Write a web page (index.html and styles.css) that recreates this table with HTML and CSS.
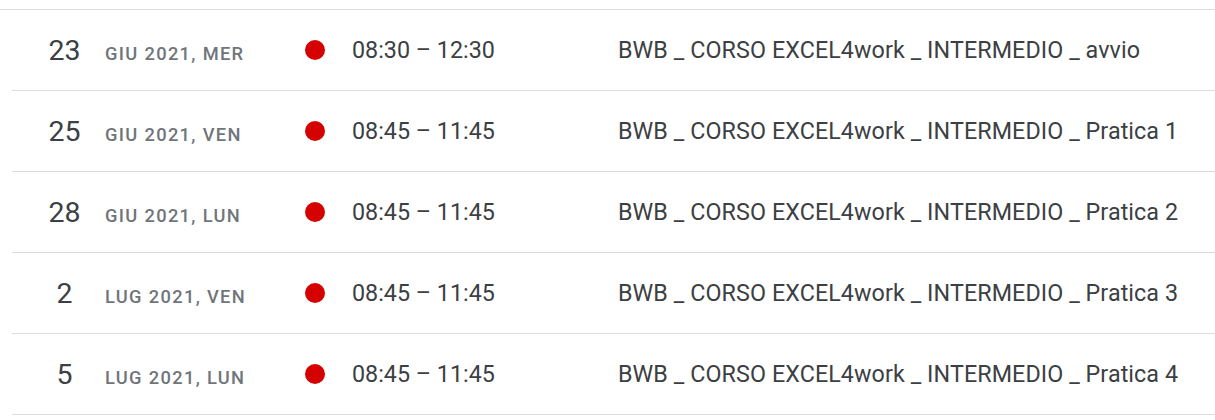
FILE: index.html
```html
<!DOCTYPE html>
<html lang="it">
<head>
<meta charset="utf-8">
<title>Agenda</title>
<link rel="stylesheet" href="styles.css">
</head>
<body>
<div class="page">
  <div class="topline"></div>
  <ul class="agenda">
    <li class="row">
      <div class="date"><span class="day">23</span><span class="label">GIU 2021, MER</span></div>
      <span class="dot"></span>
      <span class="time">08:30 – 12:30</span>
      <span class="title">BWB _ CORSO EXCEL4work _ INTERMEDIO _ avvio</span>
    </li>
    <li class="row">
      <div class="date"><span class="day">25</span><span class="label">GIU 2021, VEN</span></div>
      <span class="dot"></span>
      <span class="time">08:45 – 11:45</span>
      <span class="title">BWB _ CORSO EXCEL4work _ INTERMEDIO _ Pratica 1</span>
    </li>
    <li class="row">
      <div class="date"><span class="day">28</span><span class="label">GIU 2021, LUN</span></div>
      <span class="dot"></span>
      <span class="time">08:45 – 11:45</span>
      <span class="title">BWB _ CORSO EXCEL4work _ INTERMEDIO _ Pratica 2</span>
    </li>
    <li class="row">
      <div class="date"><span class="day">2</span><span class="label">LUG 2021, VEN</span></div>
      <span class="dot"></span>
      <span class="time">08:45 – 11:45</span>
      <span class="title">BWB _ CORSO EXCEL4work _ INTERMEDIO _ Pratica 3</span>
    </li>
    <li class="row">
      <div class="date"><span class="day">5</span><span class="label">LUG 2021, LUN</span></div>
      <span class="dot"></span>
      <span class="time">08:45 – 11:45</span>
      <span class="title">BWB _ CORSO EXCEL4work _ INTERMEDIO _ Pratica 4</span>
    </li>
  </ul>
</div>
</body>
</html>
```

FILE: styles.css
```css
html, body {
  margin: 0;
  padding: 0;
  background: #ffffff;
}

.page {
  padding-top: 9px;
  font-family: Roboto, "Liberation Sans", Arial, sans-serif;
  color: #3c4043;
}

.topline {
  border-top: 1px solid #dadce0;
}

.agenda {
  list-style: none;
  margin: 0 0 0 12px;
  padding: 0;
}

.row {
  display: flex;
  align-items: center;
  height: 80px;
  border-bottom: 1px solid #dadce0;
}

.date {
  display: flex;
  align-items: baseline;
  width: 293px;
  padding-top: 2px;
}

.day {
  margin-left: 18px;
  width: 69px;
  text-align: center;
  font-size: 28.5px;
  line-height: 32px;
  font-weight: 400;
  color: #3c4043;
}

.label {
  margin-left: 6px;
  font-size: 18.3px;
  font-weight: 500;
  letter-spacing: 1.33px;
  color: #70757a;
  text-transform: uppercase;
}

.dot {
  width: 20px;
  height: 20px;
  border-radius: 50%;
  background: #d50000;
  flex: none;
}

.time {
  margin-left: 27px;
  width: 266px;
  font-size: 23.3px;
  font-weight: 400;
  color: #3c4043;
  white-space: nowrap;
}

.title {
  font-size: 23.3px;
  letter-spacing: 0.08px;
  font-weight: 400;
  color: #3c4043;
  white-space: nowrap;
}
```
